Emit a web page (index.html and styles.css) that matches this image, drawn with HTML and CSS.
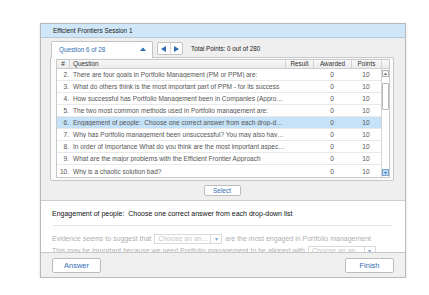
FILE: index.html
```html
<!DOCTYPE html>
<html>
<head>
<meta charset="utf-8">
<link rel="stylesheet" href="styles.css">
</head>
<body>
<div class="window">
  <div class="titlebar">Efficient Frontiers Session 1</div>
  <div class="upper">
    <div class="toolbar">
      <div class="tab">
        <span class="tab-label">Question 6 of 28</span>
        <svg class="tab-caret" width="6" height="4" viewBox="0 0 6 4"><path d="M0 4 L3 0.5 L6 4 Z" fill="#2f6db3"/></svg>
      </div>
      <div class="nav">
        <div class="nav-btn"><svg width="5" height="6" viewBox="0 0 5 6"><path d="M5 0 L0 3 L5 6 Z" fill="#2f6db3"/></svg></div>
        <div class="nav-btn"><svg width="5" height="6" viewBox="0 0 5 6"><path d="M0 0 L5 3 L0 6 Z" fill="#2f6db3"/></svg></div>
      </div>
      <div class="total">Total Points: 0 out of 280</div>
    </div>
    <div class="gridbox">
      <div class="table">
        <div class="thead">
          <div class="th c-num">#</div>
          <div class="th c-q">Question</div>
          <div class="th c-res">Result</div>
          <div class="th c-aw">Awarded</div>
          <div class="th c-pt">Points</div>
          <div class="th c-sb"></div>
        </div>
        <div class="tbody">
          <div class="rows">
            <div class="row"><div class="c-num">2.</div><div class="c-q">There are four goals in Portfolio Management (PM or PPM) are:</div><div class="c-res"></div><div class="c-aw">0</div><div class="c-pt">10</div></div>
            <div class="row"><div class="c-num">3.</div><div class="c-q">What do others think is the most important part of PPM - for its success</div><div class="c-res"></div><div class="c-aw">0</div><div class="c-pt">10</div></div>
            <div class="row"><div class="c-num">4.</div><div class="c-q">How successful has Portfolio Management been in Companies (Appro…</div><div class="c-res"></div><div class="c-aw">0</div><div class="c-pt">10</div></div>
            <div class="row"><div class="c-num">5.</div><div class="c-q">The two most common methods used in Portfolio management are:</div><div class="c-res"></div><div class="c-aw">0</div><div class="c-pt">10</div></div>
            <div class="row selected"><div class="c-num">6.</div><div class="c-q">Engagement of people:&nbsp; Choose one correct answer from each drop-d…</div><div class="c-res"></div><div class="c-aw">0</div><div class="c-pt">10</div></div>
            <div class="row"><div class="c-num">7.</div><div class="c-q">Why has Portfolio management been unsuccessful? You may also have…</div><div class="c-res"></div><div class="c-aw">0</div><div class="c-pt">10</div></div>
            <div class="row"><div class="c-num">8.</div><div class="c-q">In order of Importance What do you think are the most important aspec…</div><div class="c-res"></div><div class="c-aw">0</div><div class="c-pt">10</div></div>
            <div class="row"><div class="c-num">9.</div><div class="c-q">What are the major problems with the Efficient Frontier Approach</div><div class="c-res"></div><div class="c-aw">0</div><div class="c-pt">10</div></div>
            <div class="row last"><div class="c-num">10.</div><div class="c-q">Why is a chaotic solution bad?</div><div class="c-res"></div><div class="c-aw">0</div><div class="c-pt">10</div></div>
          </div>
          <div class="scrollbar">
            <div class="sb-btn"><svg width="3" height="2" viewBox="0 0 3 2"><path d="M0 2 L1.5 0 L3 2 Z" fill="#555"/></svg></div>
            <div class="sb-track"><div class="sb-thumb"></div></div>
            <div class="sb-btn down"><svg width="3" height="2" viewBox="0 0 3 2"><path d="M0 0 L1.5 2 L3 0 Z" fill="#2f6db3"/></svg></div>
          </div>
        </div>
      </div>
    </div>
    <div class="select-row"><div class="btn small">Select</div></div>
  </div>
  <div class="lower">
    <div class="prompt">Engagement of people:&nbsp; Choose one correct answer from each drop-down list</div>
    <div class="sep"></div>
    <div class="line">Evidence seems to suggest that <span class="dd"><span class="dd-text">Choose an an...</span><span class="dd-arrow">&#9662;</span></span> are the most engaged in Portfolio management</div>
    <div class="line">This may be important because we need Portfolio management to be aligned with <span class="dd"><span class="dd-text">Choose an an...</span><span class="dd-arrow">&#9662;</span></span></div>
  </div>
  <div class="footer">
    <div class="btn big">Answer</div>
    <div class="btn big">Finish</div>
  </div>
</div>
</body>
</html>
```

FILE: styles.css
```css
* { box-sizing: border-box; }
html, body { margin: 0; padding: 0; background: #ffffff; }
body {
  font-family: "Liberation Sans", Arial, sans-serif;
  font-size: 7px;
  color: #444;
  padding: 23px 0 0 40px;
}
.window {
  width: 366px;
  height: 255px;
  border: 1px solid #b9b9b9;
  display: flex;
  flex-direction: column;
  box-shadow: 0 1px 3px rgba(0,0,0,0.12);
  background: #fff;
}
.titlebar {
  height: 14px;
  background: #cfe7f8;
  border-bottom: 1px solid #b4cbdd;
  padding-left: 12px;
  line-height: 13px;
  color: #222;
  font-size: 6.4px;
}
.upper {
  height: 163px;
  background: #efefef;
  border-bottom: 1px solid #cdcdcd;
  padding: 3px 11px 0 9px;
  display: flex;
  flex-direction: column;
}
.toolbar {
  height: 16px;
  display: flex;
  align-items: flex-start;
  font-size: 6.3px;
}
.tab {
  position: relative;
  z-index: 1;
  margin-left: 1px;
  width: 102px;
  height: 17px;
  background: #fff;
  border: 1px solid #c4c4c4;
  border-bottom: none;
  border-radius: 2px 2px 0 0;
  display: flex;
  align-items: center;
  justify-content: space-between;
  padding: 0 6px 2px 7px;
}
.tab-label { color: #2f6db3; }
.tab-caret { display: block; }
.nav {
  margin-left: 4px;
  margin-top: 1px;
  width: 26px;
  height: 13px;
  display: flex;
  border: 1px solid #c4c4c4;
  border-radius: 2px;
  background: #fff;
}
.nav-btn {
  flex: 1;
  display: flex;
  align-items: center;
  justify-content: center;
}
.nav-btn + .nav-btn { border-left: 1px solid #d6d6d6; }
.nav-btn svg { display: block; }
.total {
  margin-left: 8px;
  margin-top: 4px;
  color: #222;
}
.gridbox {
  height: 124px;
  background: #fafafa;
  border: 1px solid #c8c8c8;
  border-radius: 0 2px 2px 2px;
  padding: 1px 3px 2px 5px;
}
.table {
  height: 119px;
  border: 1px solid #c9c9c9;
  background: #fff;
  display: flex;
  flex-direction: column;
  font-size: 6.55px;
}
.thead {
  height: 9px;
  display: flex;
  background: linear-gradient(#f7f7f7, #ebebeb);
  border-bottom: 1px solid #cfcfcf;
  color: #333;
  line-height: 8px;
  font-size: 6.4px;
}
.th + .th { border-left: 1px solid #d2d2d2; }
.thead .c-num { text-align: center; padding-left: 0; }
.thead .c-q { padding-left: 3px; }
.thead .c-sb { width: 8px; flex: none; }
.tbody {
  flex: 1;
  display: flex;
  overflow: hidden;
}
.rows { flex: 1; overflow: hidden; }
.row {
  height: 12px;
  display: flex;
  align-items: center;
  border-bottom: 1px solid #e9e9e9;
  color: #555;
}
.row.selected { background: #c5e2f8; }
.row.last { border-bottom: none; }
.c-num { width: 12px; flex: none; text-align: right; }
.c-q {
  flex: 1;
  min-width: 0;
  white-space: nowrap;
  overflow: hidden;
  text-overflow: ellipsis;
  padding-left: 4px;
}
.c-res { width: 28px; flex: none; text-align: center; }
.c-aw { width: 38px; flex: none; text-align: center; }
.c-pt { width: 30px; flex: none; text-align: center; }
.scrollbar {
  width: 8px;
  flex: none;
  border-left: 1px solid #d4d4d4;
  display: flex;
  flex-direction: column;
  padding: 1px 0;
  background: #fff;
}
.sb-btn {
  width: 7px;
  height: 7px;
  border: 1px solid #b5b5b5;
  display: flex;
  align-items: center;
  justify-content: center;
  background: #f6f6f6;
}
.sb-btn svg { display: block; }
.sb-btn.down { background: #bcd8f2; border-color: #7ea6cf; }
.sb-track { flex: 1; padding-top: 6px; }
.sb-thumb {
  width: 7px;
  height: 27px;
  border: 1px solid #b9b9b9;
  border-radius: 1px;
  background: #fff;
}
.select-row {
  flex: 1;
  display: flex;
  justify-content: center;
  align-items: center;
}
.btn {
  background: #fff;
  border: 1px solid #bdbdbd;
  border-radius: 2px;
  color: #2f6db3;
  display: flex;
  align-items: center;
  justify-content: center;
}
.btn.small { width: 37px; height: 11px; font-size: 6.5px; }
.btn.big { width: 49px; height: 15px; font-size: 7.5px; }
.lower {
  height: 51px;
  overflow: hidden;
  background: #fff;
  padding: 8px 13px 0 11px;
}
.prompt {
  color: #111;
  line-height: 10px;
  font-size: 7px;
}
.sep {
  margin: 6px 0 0 1px;
  height: 1px;
  background: #e6e6e6;
}
.line {
  color: #b0b0b0;
  line-height: 12px;
  white-space: nowrap;
}
.sep + .line { margin-top: 7px; }
.dd {
  display: inline-flex;
  align-items: center;
  height: 10px;
  border: 1px solid #dadada;
  vertical-align: middle;
  margin: 0 1px;
}
.dd-text {
  width: 55px;
  padding-left: 3px;
  color: #c6c6c6;
  line-height: 8px;
}
.dd-arrow {
  width: 11px;
  height: 8px;
  border-left: 1px solid #dadada;
  text-align: center;
  color: #7fa2cb;
  font-size: 6px;
  line-height: 8px;
}
.footer {
  flex: 1;
  background: #f0f0f0;
  border-top: 1px solid #c8c8c8;
  display: flex;
  justify-content: space-between;
  align-items: flex-start;
  padding: 5px 11px 0 11px;
}
```
